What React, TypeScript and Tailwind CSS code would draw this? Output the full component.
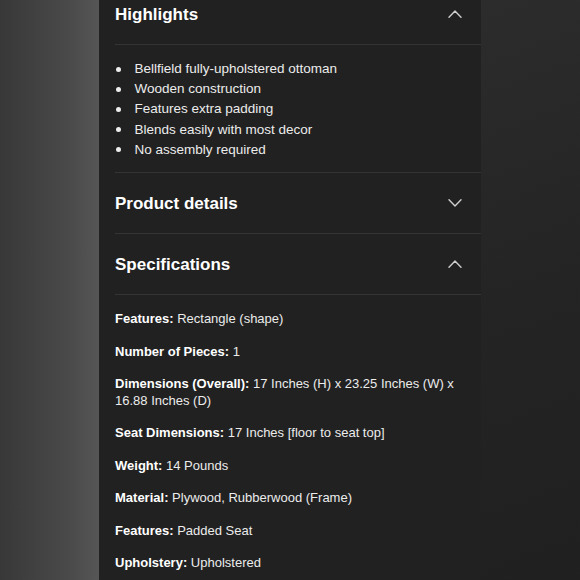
import React from "react";

const Chevron = ({ up }: { up: boolean }) => (
  <svg width="14" height="8" viewBox="0 0 14 8" className="block">
    <polyline
      points={up ? "1,7.2 7,1 13,7.2" : "1,0.8 7,7 13,0.8"}
      fill="none"
      stroke="#cfcfcf"
      strokeWidth="1.4"
      strokeLinecap="round"
      strokeLinejoin="round"
    />
  </svg>
);

const Header = ({ title, up }: { title: string; up: boolean }) => (
  <div className="flex h-[61px] items-center justify-between border-b border-[#343434] pr-[19px]">
    <div className="pt-[2px] text-[17px] font-bold text-white">{title}</div>
    <Chevron up={up} />
  </div>
);

const bullets = [
  "Bellfield fully-upholstered ottoman",
  "Wooden construction",
  "Features extra padding",
  "Blends easily with most decor",
  "No assembly required",
];

const specs: [string, string][] = [
  ["Features:", "Rectangle (shape)"],
  ["Number of Pieces:", "1"],
  ["Dimensions (Overall):", "17 Inches (H) x 23.25 Inches (W) x 16.88 Inches (D)"],
  ["Seat Dimensions:", "17 Inches [floor to seat top]"],
  ["Weight:", "14 Pounds"],
  ["Material:", "Plywood, Rubberwood (Frame)"],
  ["Features:", "Padded Seat"],
  ["Upholstery:", "Upholstered"],
];

export default function App() {
  return (
    <div
      className="flex h-[580px] w-[580px] overflow-hidden"
      style={{ fontFamily: '"Liberation Sans", Arial, Helvetica, sans-serif' }}
    >
      <div className="h-full w-[99px] bg-[linear-gradient(to_right,#383838,#4a4a4a_70%,#565656)]" />
      <div className="h-full w-[382px] bg-[#212121] pl-[16px]">
        <div className="-mt-[16px]">
          <Header title="Highlights" up={true} />
          <ul className="border-b border-[#343434] pt-[14px] pb-[12px]">
            {bullets.map((b) => (
              <li key={b} className="flex items-center text-[13.5px] leading-[20.2px] text-[#ececec]">
                <span className="ml-[0.5px] mr-[14px] h-[5px] w-[5px] rounded-full bg-[#eeeeee]" />
                {b}
              </li>
            ))}
          </ul>
          <Header title="Product details" up={false} />
          <Header title="Specifications" up={true} />
          <div className="flex flex-col gap-[16px] pt-[16px] pr-[20px]">
            {specs.map(([k, v], i) => (
              <p key={i} className="text-[13px] leading-[16.5px] text-[#ececec]">
                <span className="font-bold text-white">{k}</span> {v}
              </p>
            ))}
          </div>
        </div>
      </div>
      <div className="h-full flex-1 bg-[linear-gradient(160deg,#2c2c2c,#242424_50%,#202020)]" />
    </div>
  );
}
